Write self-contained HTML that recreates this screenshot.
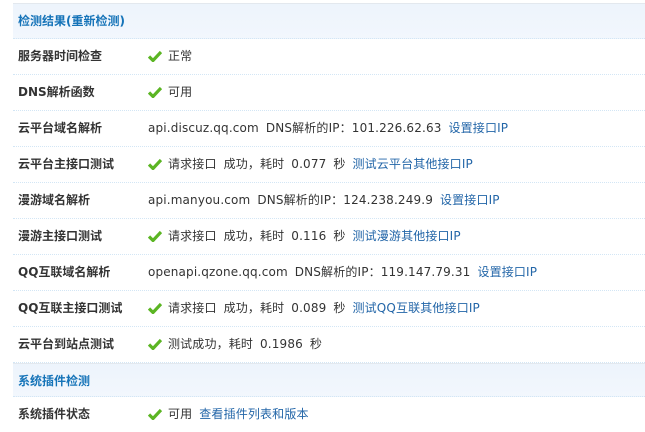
<!DOCTYPE html>
<html><head><meta charset="utf-8"><style>
html,body{margin:0;padding:0;background:#fff;width:645px;height:427px;overflow:hidden}
body{font:12px "DejaVu Sans","Noto Sans CJK SC",sans-serif;color:#333}
.t{position:absolute;left:13px;top:3px;width:632px}
.r{height:35px;border-bottom:1px dotted #d3e6f5;position:relative;line-height:35px}
.h{background:linear-gradient(#edf4fc,#f2f7fd);border-top:1px solid #e3e8ee;height:34px}
.h b{color:#1473b8;padding-left:5px;font-weight:bold}
.l{position:absolute;left:5px;font-weight:bold;color:#333}
.v{position:absolute;left:135px;white-space:nowrap;word-spacing:3px;letter-spacing:0.15px}
a{color:#2366a8;text-decoration:none}
.ck{display:inline-block;width:14px;height:12px;vertical-align:-2px;margin-right:6px}
</style></head><body>
<div class="t">
<div class="r h"><b>检测结果(重新检测)</b></div>
<div class="r"><span class="l">服务器时间检查</span><span class="v"><svg class="ck" viewBox="0 0 14 12"><path d="M1 6.5L5 10.5L13 2" stroke="#5bb523" stroke-width="3.2" fill="none"/></svg>正常</span></div>
<div class="r"><span class="l">DNS解析函数</span><span class="v"><svg class="ck" viewBox="0 0 14 12"><path d="M1 6.5L5 10.5L13 2" stroke="#5bb523" stroke-width="3.2" fill="none"/></svg>可用</span></div>
<div class="r"><span class="l">云平台域名解析</span><span class="v">api.discuz.qq.com DNS解析的IP：101.226.62.63 <a>设置接口IP</a></span></div>
<div class="r"><span class="l">云平台主接口测试</span><span class="v"><svg class="ck" viewBox="0 0 14 12"><path d="M1 6.5L5 10.5L13 2" stroke="#5bb523" stroke-width="3.2" fill="none"/></svg>请求接口 成功，耗时 0.077 秒 <a>测试云平台其他接口IP</a></span></div>
<div class="r"><span class="l">漫游域名解析</span><span class="v">api.manyou.com DNS解析的IP：124.238.249.9 <a>设置接口IP</a></span></div>
<div class="r"><span class="l">漫游主接口测试</span><span class="v"><svg class="ck" viewBox="0 0 14 12"><path d="M1 6.5L5 10.5L13 2" stroke="#5bb523" stroke-width="3.2" fill="none"/></svg>请求接口 成功，耗时 0.116 秒 <a>测试漫游其他接口IP</a></span></div>
<div class="r"><span class="l">QQ互联域名解析</span><span class="v">openapi.qzone.qq.com DNS解析的IP：119.147.79.31 <a>设置接口IP</a></span></div>
<div class="r"><span class="l">QQ互联主接口测试</span><span class="v"><svg class="ck" viewBox="0 0 14 12"><path d="M1 6.5L5 10.5L13 2" stroke="#5bb523" stroke-width="3.2" fill="none"/></svg>请求接口 成功，耗时 0.089 秒 <a>测试QQ互联其他接口IP</a></span></div>
<div class="r"><span class="l">云平台到站点测试</span><span class="v"><svg class="ck" viewBox="0 0 14 12"><path d="M1 6.5L5 10.5L13 2" stroke="#5bb523" stroke-width="3.2" fill="none"/></svg>测试成功，耗时 0.1986 秒</span></div>
<div class="r h" style="height:32px;line-height:34px"><b>系统插件检测</b></div>
<div class="r" style="border:0"><span class="l">系统插件状态</span><span class="v"><svg class="ck" viewBox="0 0 14 12"><path d="M1 6.5L5 10.5L13 2" stroke="#5bb523" stroke-width="3.2" fill="none"/></svg>可用 <a>查看插件列表和版本</a></span></div>
</div>
</body></html>
